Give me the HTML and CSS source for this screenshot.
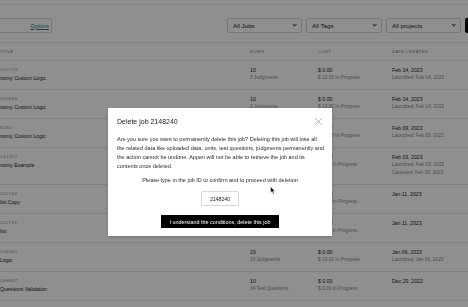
FILE: index.html
```html
<!DOCTYPE html>
<html lang="en">
  <head>
    <meta charset="UTF-8" />
    <meta name="viewport" content="width=device-width, initial-scale=1.0" />
    <title>Jobs</title>
    <link rel="stylesheet" href="styles.css">
  </head>
  <body>
    <div class="page">
      <div class="topbar"></div>

      <div class="filters">
        <div class="search">
          <a href="#" class="options-link">Options</a>
        </div>
        <div class="selects">
          <div class="select select-sm">All Jobs <span class="chevron"></span></div>
          <div class="select">All Tags <span class="chevron"></span></div>
          <div class="select select-sm">All projects <span class="chevron"></span></div>
          <button class="btn-dark"></button>
        </div>
      </div>

      <div class="jobs">
        <div class="row head">
          <span>Title</span>
          <span>Rows</span>
          <span>Cost</span>
          <span>Date Created</span>
        </div>

        <div class="row">
          <div><div class="job-id-small">452719</div><div>nomy Custom Logic</div></div>
          <div><div>10</div><div class="sub">3 Judgments</div></div>
          <div><div>$ 0.00</div><div class="sub">$ 10.00 In Progress</div></div>
          <div><div>Feb 14, 2023</div><div class="sub">Launched: Feb 14, 2023</div></div>
        </div>
        <div class="row">
          <div><div class="job-id-small">152865</div><div>nomy Custom Logic</div></div>
          <div><div>10</div><div class="sub">3 Judgments</div></div>
          <div><div>$ 0.00</div><div class="sub">$ 10.00 In Progress</div></div>
          <div><div>Feb 14, 2023</div><div class="sub">Launched: Feb 14, 2023</div></div>
        </div>
        <div class="row">
          <div><div class="job-id-small">8240</div><div>nomy Custom Logic</div></div>
          <div></div>
          <div><div>$ 0.00</div><div class="sub">$ 10.00 In Progress</div></div>
          <div><div>Feb 09, 2023</div><div class="sub">Launched: Feb 09, 2023</div></div>
        </div>
        <div class="row">
          <div><div class="job-id-small">141352</div><div>nomy Example</div></div>
          <div></div>
          <div><div>$ 0.00</div><div class="sub">$ 0.00 In Progress</div></div>
          <div>
            <div>Feb 03, 2023</div>
            <div class="sub">Launched: Feb 03, 2023</div>
            <div class="sub">Canceled: Feb 08, 2023</div>
          </div>
        </div>
        <div class="row">
          <div><div class="job-id-small">112742</div><div>list Copy</div></div>
          <div><div>10</div><div class="sub">3 Judgments</div></div>
          <div><div>$ 0.00</div><div class="sub">$ 0.00 In Progress</div></div>
          <div><div>Jan 11, 2023</div></div>
        </div>
        <div class="row">
          <div><div class="job-id-small">112741</div><div>list</div></div>
          <div></div>
          <div><div>$ 0.00</div><div class="sub">$ 0.00 In Progress</div></div>
          <div><div>Jan 11, 2023</div></div>
        </div>
        <div class="row">
          <div><div class="job-id-small">106341</div><div>Logic</div></div>
          <div><div>20</div><div class="sub">15 Judgments</div></div>
          <div><div>$ 0.00</div><div class="sub">$ 10.00 In Progress</div></div>
          <div><div>Jan 06, 2023</div><div class="sub">Launched: Jan 06, 2023</div></div>
        </div>
        <div class="row">
          <div><div class="job-id-small">098867</div><div>Questions Validation</div></div>
          <div><div>10</div><div class="sub">34 Test Questions</div></div>
          <div><div>$ 0.00</div><div class="sub">$ 0.00 In Progress</div></div>
          <div><div>Dec 29, 2022</div></div>
        </div>
      </div>
    </div>

    <div class="overlay">
      <div class="modal">
        <div class="modal-header">
          <h3>Delete job 2148240</h3>
          <svg class="close" width="7" height="7" viewBox="0 0 7 7">
            <path d="M0.5 0.5 L6.5 6.5 M6.5 0.5 L0.5 6.5" stroke="#9a9a9a" stroke-width="0.8" fill="none" />
          </svg>
        </div>
        <p class="warning">
          Are you sure you want to permanently delete this job? Deleting this job will lose all<br>
          the related data like uploaded data, units, test questions, judgments permanently and<br>
          the action cannot be undone. Appen will not be able to retrieve the job and its<br>
          contents once deleted.
        </p>
        <p class="confirm-text">Please type in the job ID to confirm and to proceed with deletion</p>
        <div class="job-id">2148240</div>
        <button class="btn-delete">I understand the conditions, delete this job</button>
      </div>
      <svg class="cursor" width="6" height="9" viewBox="0 0 6 9">
        <path d="M0.5 0.5 L0.5 7 L2 5.6 L3.2 8.3 L4.2 7.8 L3 5.2 L5 5.2 Z" fill="#111" stroke="#fff" stroke-width="0.5" />
      </svg>
    </div>
  </body>
</html>
```

FILE: styles.css
```css
:root {
  --text-color: #222222;
  --muted-color: #8a8a8a;
  --line-color: #e6e6e6;
}

html,
body {
  margin: 0;
  padding: 0;
  overflow: hidden;
}

body {
  font-family: "Liberation Sans", Arial, sans-serif;
  background-color: #ffffff;
  color: var(--text-color);
}

.page {
  width: 490px;
}

.topbar {
  height: 4px;
  border-bottom: 1px solid var(--line-color);
}

.filters {
  display: flex;
  justify-content: space-between;
  margin-top: 13px;
  height: 15px;
}

.search {
  width: 72px;
  margin-left: -20px;
  box-sizing: border-box;
  border: 1px solid #d4d4d4;
  border-radius: 2px;
  display: flex;
  align-items: center;
  justify-content: flex-end;
  padding-right: 2px;
}

.options-link {
  font-size: 5.4px;
  color: #2f6f86;
  text-decoration: underline;
}

.selects {
  display: flex;
  gap: 4px;
}

.select {
  width: 76px;
  box-sizing: border-box;
  border: 1px solid #d4d4d4;
  border-radius: 2px;
  display: flex;
  align-items: center;
  justify-content: space-between;
  padding: 0 5px;
  font-size: 6.2px;
}

.select-sm {
  width: 75px;
}

.chevron {
  width: 2.4px;
  height: 2.4px;
  border-right: 0.7px solid #555;
  border-bottom: 0.7px solid #555;
  transform: rotate(45deg);
  margin-top: -2px;
}

.btn-dark {
  width: 25px;
  border: none;
  border-radius: 2px;
  background-color: #000000;
}

.jobs {
  margin-top: 9px;
  border-top: 1px solid var(--line-color);
}

.row {
  display: grid;
  grid-template-columns: 250px 68px 74px 1fr;
  box-sizing: border-box;
  min-height: 29px;
  padding: 5px 0 7px;
  border-bottom: 1px solid var(--line-color);
  font-size: 5.2px;
  line-height: 8px;
}

.row .sub {
  font-size: 4.8px;
  color: var(--muted-color);
}

.row .job-id-small {
  font-size: 4.4px;
  letter-spacing: 0.5px;
  color: var(--muted-color);
}

.row.head {
  height: 18px;
  min-height: 0;
  padding: 0;
  align-items: center;
  font-size: 4px;
  letter-spacing: 0.5px;
  text-transform: uppercase;
  color: #777777;
}

.overlay {
  position: fixed;
  inset: 0;
  background-color: rgba(0, 0, 0, 0.44);
}

.modal {
  width: 224px;
  box-sizing: border-box;
  margin: 108px 0 0 108px;
  padding: 9px 9px 8px;
  background-color: #ffffff;
  box-shadow: 0 1px 3px rgba(0, 0, 0, 0.2);
  display: flex;
  flex-direction: column;
  align-items: center;
}

.modal-header {
  align-self: stretch;
  display: flex;
  justify-content: space-between;
  align-items: center;
  height: 9px;
}

.modal-header h3 {
  margin: 0;
  font-size: 7px;
  font-weight: normal;
  color: #1e1e1e;
}

.close {
  margin-right: 1px;
}

.warning {
  align-self: stretch;
  margin: 9px 0 0;
  font-size: 5.5px;
  line-height: 9px;
  color: #2a2a2a;
  white-space: nowrap;
}

.confirm-text {
  margin: 5px 0 0;
  font-size: 5.5px;
  line-height: 9px;
  color: #2a2a2a;
}

.job-id {
  margin-top: 6px;
  width: 38px;
  height: 15px;
  box-sizing: border-box;
  border: 1px solid #d8d8d8;
  border-radius: 1px;
  display: flex;
  align-items: center;
  justify-content: center;
  font-size: 5.2px;
}

.btn-delete {
  margin-top: 9px;
  width: 118px;
  height: 13px;
  padding: 0;
  border: none;
  background-color: #000000;
  color: #ffffff;
  font-family: inherit;
  font-size: 5.4px;
}

.cursor {
  position: absolute;
  left: 270px;
  top: 186px;
}
```
